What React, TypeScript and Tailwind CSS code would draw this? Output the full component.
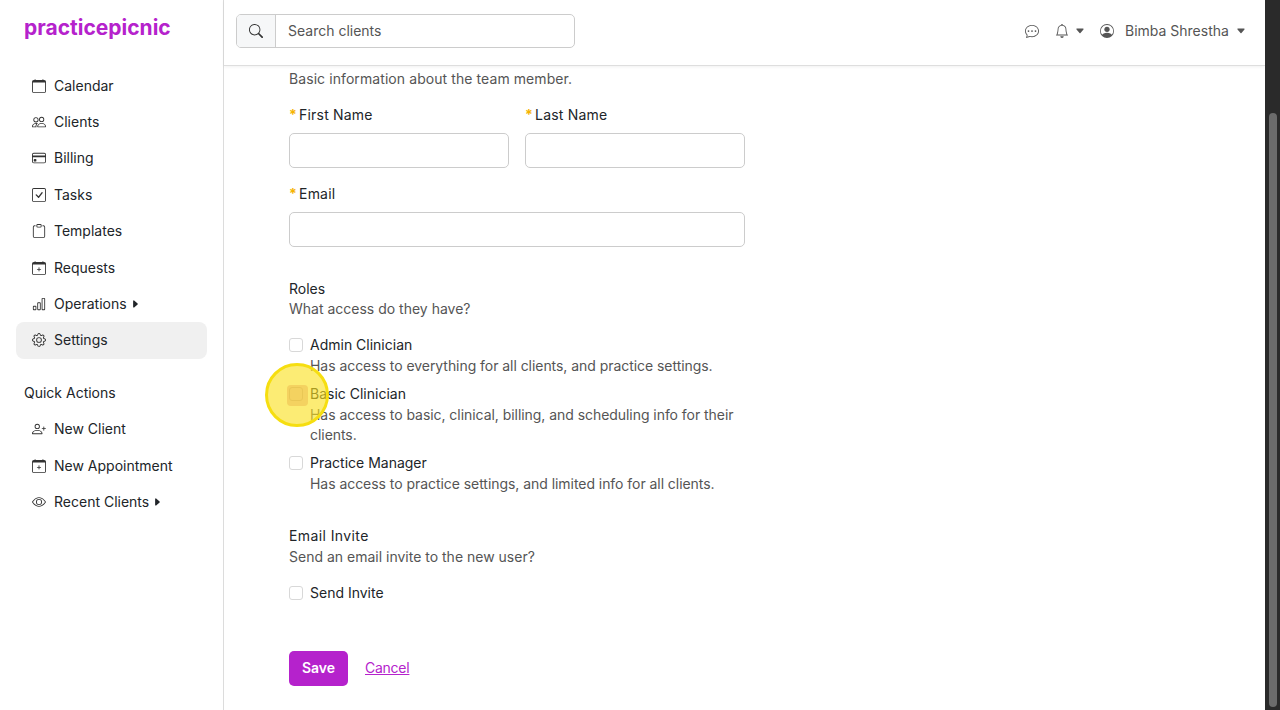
import React from 'react';
import {
  BsBarChart,
  BsBell,
  BsCalendar,
  BsCalendarPlus,
  BsCaretDownFill,
  BsCaretRightFill,
  BsChatDots,
  BsCheckSquare,
  BsClipboard,
  BsCreditCard,
  BsEye,
  BsGear,
  BsPeople,
  BsPersonCircle,
  BsPersonPlus,
  BsSearch,
} from 'react-icons/bs';

const navItems = [
  { label: 'Calendar', icon: BsCalendar },
  { label: 'Clients', icon: BsPeople },
  { label: 'Billing', icon: BsCreditCard },
  { label: 'Tasks', icon: BsCheckSquare },
  { label: 'Templates', icon: BsClipboard },
  { label: 'Requests', icon: BsCalendarPlus },
  { label: 'Operations', icon: BsBarChart, caret: true },
  { label: 'Settings', icon: BsGear, active: true },
];

const quickActions = [
  { label: 'New Client', icon: BsPersonPlus },
  { label: 'New Appointment', icon: BsCalendarPlus },
  { label: 'Recent Clients', icon: BsEye, caret: true },
];

type NavItem = { label: string; icon: React.ComponentType<{ className?: string }>; caret?: boolean; active?: boolean };

const NavRow = ({ item }: { item: NavItem }) => {
  const Icon = item.icon;
  return (
    <a className={`flex h-[36.4px] items-center rounded-lg pl-[16px] text-[#212529] ${item.active ? 'bg-[#f0f0f0]' : ''}`}>
      <Icon className="mr-[8px] h-[14px] w-[14px] text-[#333]" />
      <span>{item.label}</span>
      {item.caret && <BsCaretRightFill className="ml-[3px] h-[10px] w-[10px]" />}
    </a>
  );
};

const TextInput = () => (
  <div className="h-[35px] w-full rounded-[5px] border border-[#ccc] bg-white" />
);

const Field = ({ label, className }: { label: string; className?: string }) => (
  <div className={className}>
    <div className="flex h-[20px] items-center tracking-[0.2px] text-[#212529]">
      <span className="mr-[2px] font-bold text-[#f5b301]">*</span>
      {label}
    </div>
    <div className="mt-[8px]">
      <TextInput />
    </div>
  </div>
);

const CheckRow = ({ label, help }: { label: string; help?: string }) => (
  <div className="flex">
    <span className="mt-[3px] h-[14px] w-[14px] shrink-0 rounded-[3px] border border-[#d8d8d8] bg-white" />
    <div className="ml-[7px] w-[436px]">
      <div className="h-[20px] text-[#212529]">{label}</div>
      {help && <div className="mt-px tracking-[-0.05px] text-[#555]">{help}</div>}
    </div>
  </div>
);

export default function App() {
  return (
    <div className="relative flex h-[710px] w-[1280px] overflow-hidden bg-white font-['Inter',sans-serif] text-[14px] leading-[20px] font-normal">
      <aside className="w-[224px] shrink-0 border-r border-[#dcdcdc] px-[16px]">
        <div className="h-[67.45px] pt-[14px] pl-[8px] text-[21px] leading-[28px] font-bold text-[#b522cc]">
          practicepicnic
        </div>
        {navItems.map((item) => (
          <NavRow key={item.label} item={item} />
        ))}
        <div className="mt-[24.55px] flex h-[20px] items-center pl-[8px] text-[#212529]">Quick Actions</div>
        <div className="mt-[8px]">
          {quickActions.map((item) => (
            <NavRow key={item.label} item={item} />
          ))}
        </div>
      </aside>

      <div className="flex min-w-0 flex-1 flex-col">
        <header className="flex h-[66px] shrink-0 items-center justify-between border-b border-[#dedede] pr-[19px] pb-[4px] pl-[12px] shadow-[0_1px_3px_rgba(0,0,0,0.06)]">
          <div className="flex h-[34px] w-[339px] overflow-hidden rounded-[5px] border border-[#ccc]">
            <div className="flex w-[39px] items-center justify-center border-r border-[#ccc] bg-[#f6f7f8]">
              <BsSearch className="h-[14px] w-[14px] text-[#333]" />
            </div>
            <div className="flex flex-1 items-center pl-[12px] text-[#555]">Search clients</div>
          </div>
          <div className="flex items-center text-[#555]">
            <BsChatDots className="h-[14px] w-[14px]" />
            <BsBell className="ml-[16px] h-[14px] w-[14px]" />
            <BsCaretDownFill className="ml-[6px] h-[10px] w-[10px]" />
            <BsPersonCircle className="ml-[15px] h-[14px] w-[14px]" />
            <span className="ml-[11px] w-[105px] whitespace-nowrap">Bimba Shrestha</span>
            <BsCaretDownFill className="ml-[6px] h-[10px] w-[10px]" />
          </div>
        </header>

        <main className="flex-1 pt-[3px] pl-[65px]">
          <p className="tracking-[0.08px] text-[#555]">Basic information about the team member.</p>
          <div className="mt-[16px] flex w-[456px] gap-[16px]">
            <Field label="First Name" className="flex-1" />
            <Field label="Last Name" className="flex-1" />
          </div>
          <Field label="Email" className="mt-[16px] w-[456px]" />

          <div className="mt-[32px] text-[#212529]">Roles</div>
          <p className="text-[#555]">What access do they have?</p>
          <div className="mt-[16px] flex flex-col gap-[8px]">
            <CheckRow label="Admin Clinician" help="Has access to everything for all clients, and practice settings." />
            <CheckRow label="Basic Clinician" help="Has access to basic, clinical, billing, and scheduling info for their clients." />
            <CheckRow label="Practice Manager" help="Has access to practice settings, and limited info for all clients." />
          </div>

          <div className="mt-[32px] tracking-[0.4px] text-[#212529]">Email Invite</div>
          <p className="mt-px text-[#555]">Send an email invite to the new user?</p>
          <div className="mt-[16px]">
            <CheckRow label="Send Invite" />
          </div>

          <div className="mt-[48px] flex items-center">
            <button className="h-[35px] w-[59px] rounded-[5px] bg-[#b522cc] pb-[2px] font-semibold text-white">Save</button>
            <a className="mb-[2px] ml-[17px] tracking-[-0.25px] text-[#b522cc] underline">Cancel</a>
          </div>
        </main>
      </div>

      <div className="w-[15px] shrink-0 bg-[#2a2a2a] pt-[113px] pr-[3px] pb-[3px] pl-[4px]">
        <div className="h-full rounded-full bg-[#6b6b6b]" />
      </div>

      <div className="absolute top-[363px] left-[265px] flex h-[64px] w-[64px] items-center justify-center rounded-full border-[3px] border-[#f6de10] bg-[rgba(250,225,30,0.62)]">
        <span className="h-[21px] w-[21px] rounded-[4px] bg-[rgba(225,150,50,0.3)]" />
      </div>
    </div>
  );
}
